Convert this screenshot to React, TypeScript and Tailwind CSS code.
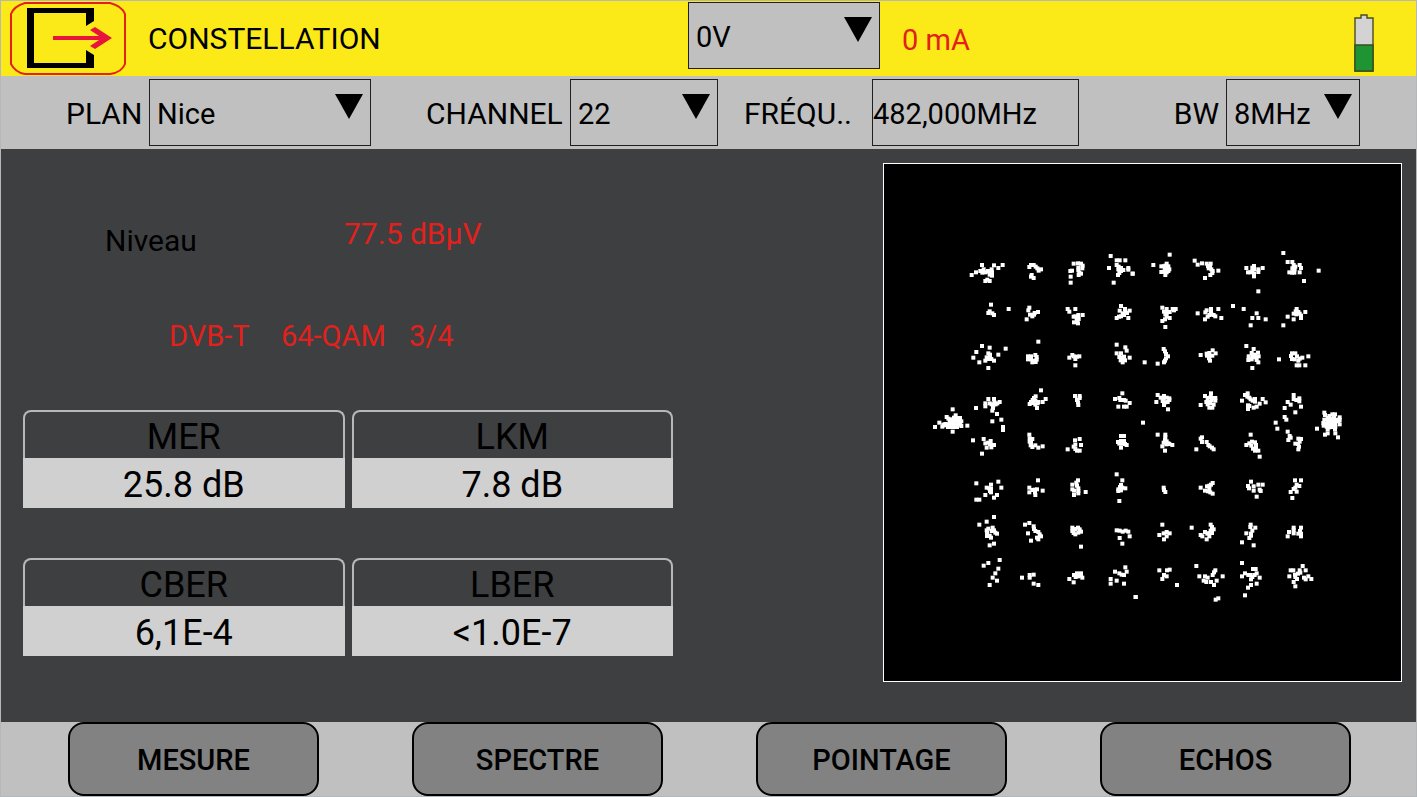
import type { ReactNode } from "react";

// received symbols, grouped by the part of the plane they fall in
const SYMBOLS = [
  {
    x: 108,
    y: 228,
    dots: `154,104 167,96 185,74 180,92 186,97 190,87 196,96 203,92 209,96 214,87 221,75 215,96 215,106 234,83 247,74 195,122 201,118 208,122 208,103
      327,80 332,74 340,74 346,79 351,84 355,91 362,87 334,104 332,109 340,113
      460,70 473,69 482,70 487,76 486,84 474,82 474,90 477,97 475,104 482,100 455,91 450,92 451,109 451,127
      571,47 566,83 589,60 598,60 615,60 589,74 595,79 594,87 602,83 602,92 609,89 597,98 593,104 624,83 624,88 637,100 580,127
      212,193 265,206 208,213 204,218 216,219 221,224
      327,202 324,210 319,237 329,223 336,228 343,218 353,215 341,223
      442,206 447,214 465,206 487,224 465,228 460,229 474,224 469,235 475,236 461,246 473,249 470,242
      602,197 598,211 614,206 628,211 615,214 620,218 607,219 611,224 602,228 596,229 589,233 624,233
      185,317 208,322 256,325 168,335 159,352 177,366 234,343 204,339 209,343 209,351 199,351 203,356 195,361 213,356 221,361 204,383
      354,304 323,348 332,348 323,357 332,357 345,344 349,350 349,358 340,361 336,366 346,365
      447,352 456,344 460,348 465,356 470,349 477,348 465,375
      589,313 615,321 619,331 589,339 602,339 597,350 603,352 611,349 628,352 601,360 609,357 614,360 607,366`,
  },
  {
    x: 738,
    y: 228,
    dots: `7,100 118,43 69,74 109,70 105,76 93,78 100,78 114,78 112,85 117,87 104,88 93,95 100,94 109,96 114,92 105,104
      193,61 202,73 215,69 229,70 241,70 233,77 239,78 235,84 243,87 247,92 246,98 240,104 224,113 264,91
      348,83 371,77 366,82 371,87 384,87 384,95 397,83 353,96 360,96 366,92 371,100 371,108 384,153
      459,38 472,65 486,65 490,74 495,79 486,84 493,87 489,93 477,96 485,97 492,97 508,74 512,83 508,96 565,91 521,122
      96,202 109,206 101,214 109,218 118,215 105,222 109,229 118,233 104,237 96,242 105,260 127,206 136,206 131,210
      202,219 224,237 229,210 242,206 242,212 225,216 237,224 243,222 250,224 255,228 232,229 264,206 273,233
      308,197 340,206 379,219 366,233 384,233 406,237 361,255
      459,255 472,229 499,206 496,213 504,215 490,220 498,222 508,220 512,226 512,233 490,237 525,215
      43,366 82,370 100,326 104,333 107,341 113,348 107,354 104,361 101,366
      211,344 247,330 256,339 229,340 237,338 230,346 238,347 246,346 236,354 239,361
      348,317 370,326 383,337 364,338 355,348 366,349 374,343 354,359 364,357 375,351 385,348 379,359 384,366 366,383
      446,357 485,339 495,339 482,347 500,348 485,356 493,357 508,355 504,361 516,352 534,348 499,375 507,375 525,375`,
  },
  {
    x: 108,
    y: 603,
    dots: `44,185 57,172 97,132 141,181 97,199 79,155 84,160 106,150 93,162 101,157 110,158 119,158 88,168 97,168 106,166 114,168 123,168 75,176 84,177 93,177 101,176 75,180 66,184 69,178 110,178 119,178 123,182 110,185 101,185 92,185 83,185
      167,128 204,101 221,101 195,114 195,123 208,114 214,117 222,110 219,120 226,117 231,114 238,110 218,128 216,136 230,146 216,168 243,163 248,185 248,194
      362,75 376,101 367,110 346,93 341,98 337,104 345,106 332,110 328,116 338,113 354,110 345,118 350,128 352,114
      464,92 478,92 478,98 470,104 473,111 474,119
      606,84 584,101 597,98 600,104 611,104 616,106 628,113 594,124 611,124 619,124
      158,225 190,221 185,265 195,234 204,232 211,227 199,247 209,237 213,246 221,239
      327,208 328,219 336,221 328,229 332,233 331,240 336,245 345,240 354,247 367,243
      442,252 464,225 478,221 482,239 465,238 460,244 465,251 470,256 478,256
      602,212 611,212 593,230 602,227 611,227 597,235 606,235 614,236 619,239 602,247`,
  },
  {
    x: 738,
    y: 603,
    dots: `78,110 82,89 91,97 101,92 100,100 109,97 117,99 117,104 97,107 105,111 112,110 101,119 113,132
      211,119 242,84 224,92 232,98 241,95 250,98 255,98 255,106 228,110 236,110 244,104 232,117 240,113 250,118 237,127 246,127
      335,106 352,84 344,89 351,94 357,97 361,102 374,101 367,106 374,109 388,115 397,101 406,111 353,120 357,122 353,131 370,127 379,124
      490,89 472,110 481,118 463,128 490,101 498,104 507,99 507,108 512,124 495,141 463,155 468,163 436,172 441,190 472,199 38,172
      560,190 582,142 584,149 606,147 614,147 597,152 592,158 601,160 611,158 628,156 619,163 628,164 582,163 592,167 602,168 611,168 623,168 579,173 588,176 597,176 606,176 614,175 628,177 580,181 589,184 597,186 606,185 615,184 592,192 614,192 615,204 584,208 592,204 623,216
      82,208 105,208 105,216 104,223 109,228 100,232 96,243 108,237 114,234 117,236 126,239 104,256
      198,252 215,216 211,220 215,230 229,230 234,239 238,243 245,247 250,252
      361,208 348,239 357,234 365,229 374,231 363,241 377,239 377,247 368,250 374,256 384,256 388,274
      478,212 481,217 474,224 512,221 504,220 508,229 495,235 503,236 506,244 504,252`,
  },
  {
    x: 108,
    y: 918,
    dots: `168,39 234,34 243,52 212,43 199,52 206,54 212,56 209,62 212,66 195,74 221,82 230,74 168,88 177,88
      353,30 327,52 327,66 336,59 343,58 350,57 344,66 345,74 367,61
      473,30 468,37 456,43 470,46 474,54 456,57 461,61 461,74 474,62 474,69 496,65
      589,12 606,30 602,44 599,50 606,52 615,54 594,57 594,62 602,60 597,92
      221,140 177,163 199,154 204,175 217,172 199,180 221,180 200,188 214,182 225,187 230,190 200,197 208,196 212,202 208,225 221,220
      314,163 327,158 340,168 341,176 323,189 345,182 354,185 358,192 362,198 350,202 354,207 332,211
      456,172 473,172 456,182 465,176 478,177 460,188 465,192 474,187 482,184 482,229
      589,180 598,181 607,184 616,181 624,184 598,203 628,198 606,220
      238,269 204,278 190,286 234,295 225,309 217,322 230,331 208,344
      305,322 328,314 328,322 340,313 340,340 354,344
      447,326 460,336 461,314 470,309 482,309 466,320 474,318 482,316 486,322
      615,291 584,304 619,304 597,309 604,313 611,314 571,326 589,331 571,340 611,340 646,380`,
  },
  {
    x: 738,
    y: 918,
    dots: `100,52 101,59 105,65
      211,52 247,38 242,43 237,46 230,48 237,56 224,61 233,63 240,66 247,70
      362,34 353,47 356,54 370,48 384,43 397,43 370,61 388,58 391,62 379,79
      494,30 512,30 499,43 507,47 495,52 490,56 499,64 481,65 486,83
      96,163 87,194 100,189 109,185 118,189 109,198 101,207
      184,172 241,163 245,170 250,177 241,181 224,185 231,190 237,188 245,188 211,194 216,198 237,198 229,207
      361,163 360,170 375,172 366,181 348,189 362,190 362,196 357,203 335,216 370,225
      512,172 490,172 490,180 476,185 490,189 472,198 509,182 504,190 512,190 512,198
      87,300 110,300 118,298 101,314 109,318 96,326 140,344 16,380
      198,287 255,300 251,306 247,314 277,318 207,318 224,318 232,322 220,331 228,335 242,335 259,331 251,344 264,384 256,388
      335,278 335,318 344,309 354,314 361,314 368,296 376,296 379,309 373,314 366,320 362,327 388,322 379,340 362,344 353,352 344,375
      517,287 481,300 489,300 526,300 508,300 510,307 503,310 477,318 494,313 495,320 500,326 490,335 495,348 521,322 526,327 534,318 543,326`,
  },
];

const MEASURES = [
  { label: "MER", value: "25.8 dB" },
  { label: "LKM", value: "7.8 dB" },
  { label: "CBER", value: "6,1E-4" },
  { label: "LBER", value: "<1.0E-7" },
];

const TABS = ["MESURE", "SPECTRE", "POINTAGE", "ECHOS"];

function Dropdown({ id, label, value, className }: { id: string; label?: string; value: string; className: string }) {
  return (
    <div className={`relative shrink-0 ${className}`}>
      <select
        id={id}
        aria-label={label}
        className="h-[67px] w-full appearance-none border border-[#231f20] bg-[#c0c0c0] pt-0.5 pl-[7px] outline-none"
      >
        <option>{value}</option>
      </select>
      <svg viewBox="0 0 28 25" className="pointer-events-none absolute top-[15px] right-2 h-[25px] w-7">
        <path d="M0 0H28L14 25Z" fill="#000" />
      </svg>
    </div>
  );
}

function Label({ htmlFor, className, children }: { htmlFor: string; className: string; children: ReactNode }) {
  return (
    <label htmlFor={htmlFor} className={`shrink-0 pt-0.5 text-3xl leading-9 ${className}`}>
      {children}
    </label>
  );
}

function ExitIcon() {
  return (
    <svg viewBox="0 0 116 73" className="h-[73px] w-[116px]" fill="none">
      <path
        d="M15 1H100C108 3 113 7 115 12V62C113 67 108 71 100 72H15C8 71 3 66 1 62V12C3 7 8 3 15 1Z"
        stroke="#e2211c"
        strokeWidth="2"
      />
      <path d="M17 6H84V19L76 24V11H24V61H76V48L84 53V66H17Z" fill="#000" />
      <path d="M43 34H89L80 28L85 25L102 36L85 47L80 44L89 38H43Z" fill="#e8143c" />
    </svg>
  );
}

function Battery() {
  return (
    <svg viewBox="0 0 20 58" className="h-[58px] w-5" role="img" aria-label="Battery">
      <path d="M1 4H7V1H13V4H19V57H1Z" fill="#d3d3d3" stroke="#4b4b20" strokeWidth="1.4" />
      <path d="M1 31H19V57H1Z" fill="#1f9432" stroke="#3c4a20" strokeWidth="1.4" />
    </svg>
  );
}

function Constellation() {
  return (
    <svg viewBox="0 0 1551 1551" className="aspect-square w-full bg-black" role="img" aria-label="Constellation">
      {SYMBOLS.map((block) => (
        <g key={`${block.x}-${block.y}`} transform={`translate(${block.x} ${block.y})`} fill="#fff">
          {block.dots.split(/\s+/).map((dot, i) => {
            const [x, y] = dot.split(",").map(Number);
            return <rect key={i} x={x - 5} y={y - 5} width="12" height="12" />;
          })}
        </g>
      ))}
    </svg>
  );
}

export default function App() {
  return (
    <div className="flex min-h-screen flex-col border border-[#b4b8ba] bg-[#3e3f41] font-[Roboto,sans-serif] text-[29px] leading-9 text-black">
      <header className="flex h-[75px] items-start bg-[#fbea18] pt-px">
        <div className="flex w-[687px] items-center">
          <button aria-label="Exit" className="ml-[9px]">
            <ExitIcon />
          </button>
          <h1 className="ml-[22px] text-3xl leading-9">CONSTELLATION</h1>
        </div>
        <Dropdown id="voltage" label="Voltage" value="0V" className="w-48" />
        <p className="ml-[22px] pt-5 text-[#e2211c]">0 mA</p>
        <div className="mr-[42px] ml-auto pt-3">
          <Battery />
        </div>
      </header>

      <section className="flex h-[73px] items-center bg-[#c0c0c0]">
        <Label htmlFor="plan" className="ml-[65px] w-[83px]">
          PLAN
        </Label>
        <Dropdown id="plan" value="Nice" className="w-[222px]" />
        <Label htmlFor="channel" className="ml-[55px] w-36">
          CHANNEL
        </Label>
        <Dropdown id="channel" value="22" className="w-[148px]" />
        <Label htmlFor="frequency" className="ml-[26px] w-32">
          FRÉQU..
        </Label>
        <input
          id="frequency"
          defaultValue="482,000MHz"
          className="h-[67px] w-[207px] border border-[#231f20] bg-transparent pt-0.5 outline-none"
        />
        <Label htmlFor="bandwidth" className="ml-auto pr-[7px]">
          BW
        </Label>
        <Dropdown id="bandwidth" value="8MHz" className="mr-14 w-[134px]" />
      </section>

      <main className="flex flex-1 items-start justify-between">
        <div className="w-[672px] pl-[22px]">
          <div className="flex pt-[67px] text-3xl leading-9">
            <p className="w-[239px] pt-[7px] pl-[82px]">Niveau</p>
            <p className="pl-[82px] text-[#e2211c]">77.5 dBµV</p>
          </div>
          <p className="flex pt-[59px] pl-[146px] text-[#e2211c]">
            <span className="w-28">DVB-T</span>
            <span className="w-32">64-QAM</span>
            <span>3/4</span>
          </p>
          <dl className="grid grid-cols-2 gap-x-[7px] gap-y-[50px] pt-14 text-center text-4xl">
            {MEASURES.map((m) => (
              <div key={m.label}>
                <dt className="h-12 rounded-t-lg border-2 border-b-0 border-[#b8b8b8] pt-[5px]">{m.label}</dt>
                <dd className="h-[50px] bg-[#d0d0d0] pt-[7px]">{m.value}</dd>
              </div>
            ))}
          </dl>
        </div>
        <div className="mt-3.5 mr-3.5 w-[519px] border border-white">
          <Constellation />
        </div>
      </main>

      <nav className="grid h-[74px] grid-cols-4 gap-[93px] bg-[#c0c0c0] pr-[65px] pl-[67px]">
        {TABS.map((tab) => (
          <button key={tab} className="rounded-2xl border-2 border-black bg-[#828282] pt-0.5 font-medium">
            {tab}
          </button>
        ))}
      </nav>
    </div>
  );
}
